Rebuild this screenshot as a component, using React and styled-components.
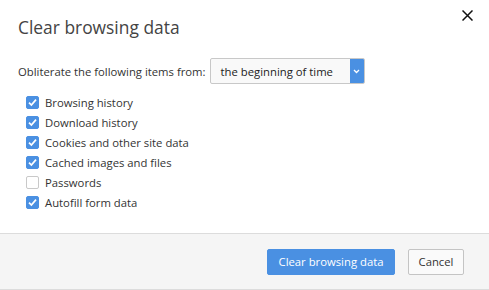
import React from "react";
import styled, { createGlobalStyle } from "styled-components";

const GlobalStyle = createGlobalStyle`
  html, body {
    margin: 0;
    padding: 0;
    background: #fff;
  }
  body {
    font-family: "Open Sans", "Noto Sans", sans-serif;
    color: #333;
  }
`;

const Dialog = styled.div`
  width: 489px;
  height: 290px;
  display: flex;
  flex-direction: column;
  background: #fff;
  box-sizing: border-box;
`;

const Header = styled.div`
  position: relative;
  height: 47px;
  padding: 14px 0 0 18px;
  box-sizing: border-box;
`;

const Title = styled.h1`
  margin: 0;
  font-size: 17.4px;
  font-weight: 400;
  line-height: 26px;
  color: #444;
`;

const CloseButton = styled.button`
  position: absolute;
  top: 7px;
  right: 14px;
  width: 16px;
  height: 16px;
  padding: 0;
  border: none;
  background: none;
  display: flex;
  align-items: center;
  justify-content: center;
  cursor: pointer;
`;

const Body = styled.div`
  flex: 1;
  padding: 11px 18px 0;
`;

const RangeRow = styled.div`
  display: flex;
  align-items: center;
  gap: 4px;
  font-size: 11.3px;
  color: #333;
`;

const SelectBox = styled.div`
  width: 155px;
  height: 26px;
  box-sizing: border-box;
  border: 1px solid #c8c8c8;
  border-radius: 2px;
  background: #f9f9f9;
  display: flex;
  align-items: stretch;
  overflow: hidden;
`;

const SelectValue = styled.span`
  flex: 1;
  display: flex;
  align-items: center;
  padding-left: 10px;
  font-size: 11.3px;
  color: #222;
`;

const SelectArrow = styled.span`
  width: 14px;
  background: #4a90e2;
  display: flex;
  align-items: center;
  justify-content: center;
`;

const CheckList = styled.div`
  display: flex;
  flex-direction: column;
  margin-top: 8px;
  padding-left: 8px;
`;

const CheckRow = styled.label`
  height: 20px;
  display: flex;
  align-items: center;
  gap: 6px;
  font-size: 11.3px;
  color: #333;
`;

const Box = styled.span`
  width: 13px;
  height: 13px;
  box-sizing: border-box;
  border-radius: 2px;
  display: flex;
  align-items: center;
  justify-content: center;
  background: ${(p) => (p.$checked ? "#4a90e2" : "#fff")};
  border: 1px solid ${(p) => (p.$checked ? "#4a90e2" : "#c9c9c9")};
`;

const Footer = styled.div`
  height: 57px;
  box-sizing: border-box;
  background: #f5f5f5;
  border-top: 1px solid #dcdcdc;
  border-bottom: 1px solid #dcdcdc;
  display: flex;
  align-items: center;
  justify-content: flex-end;
  gap: 13px;
  padding-right: 25px;
`;

const Button = styled.button`
  height: 26px;
  box-sizing: border-box;
  border-radius: 2px;
  font-family: inherit;
  font-size: 11.3px;
  padding: 0;
  white-space: nowrap;
  cursor: pointer;
  width: ${(p) => p.$width}px;
  background: ${(p) => (p.$primary ? "#4a90e2" : "#fafafa")};
  color: ${(p) => (p.$primary ? "#fff" : "#333")};
  border: 1px solid ${(p) => (p.$primary ? "#4a90e2" : "#c4c4c4")};
`;

const items = [
  { label: "Browsing history", checked: true },
  { label: "Download history", checked: true },
  { label: "Cookies and other site data", checked: true },
  { label: "Cached images and files", checked: true },
  { label: "Passwords", checked: false },
  { label: "Autofill form data", checked: true },
];

function Check() {
  return (
    <svg width="9" height="9" viewBox="0 0 9 9">
      <path d="M1 4.6 L3.4 7 L8 1.6" fill="none" stroke="#fff" strokeWidth="1.7" />
    </svg>
  );
}

export default function App() {
  return (
    <>
      <GlobalStyle />
      <Dialog>
        <Header>
          <Title>Clear browsing data</Title>
          <CloseButton aria-label="Close">
            <svg width="11" height="11" viewBox="0 0 11 11">
              <path d="M0.5 0.5 L10.5 10.5 M10.5 0.5 L0.5 10.5" stroke="#111" strokeWidth="1.5" />
            </svg>
          </CloseButton>
        </Header>
        <Body>
          <RangeRow>
            <span>Obliterate the following items from:</span>
            <SelectBox>
              <SelectValue>the beginning of time</SelectValue>
              <SelectArrow>
                <svg width="7" height="5" viewBox="0 0 7 5">
                  <path d="M1 1 L3.5 3.5 L6 1" fill="none" stroke="#fff" strokeWidth="1.3" />
                </svg>
              </SelectArrow>
            </SelectBox>
          </RangeRow>
          <CheckList>
            {items.map((item) => (
              <CheckRow key={item.label}>
                <Box $checked={item.checked}>{item.checked && <Check />}</Box>
                {item.label}
              </CheckRow>
            ))}
          </CheckList>
        </Body>
        <Footer>
          <Button $primary $width={128}>Clear browsing data</Button>
          <Button $width={56}>Cancel</Button>
        </Footer>
      </Dialog>
    </>
  );
}
